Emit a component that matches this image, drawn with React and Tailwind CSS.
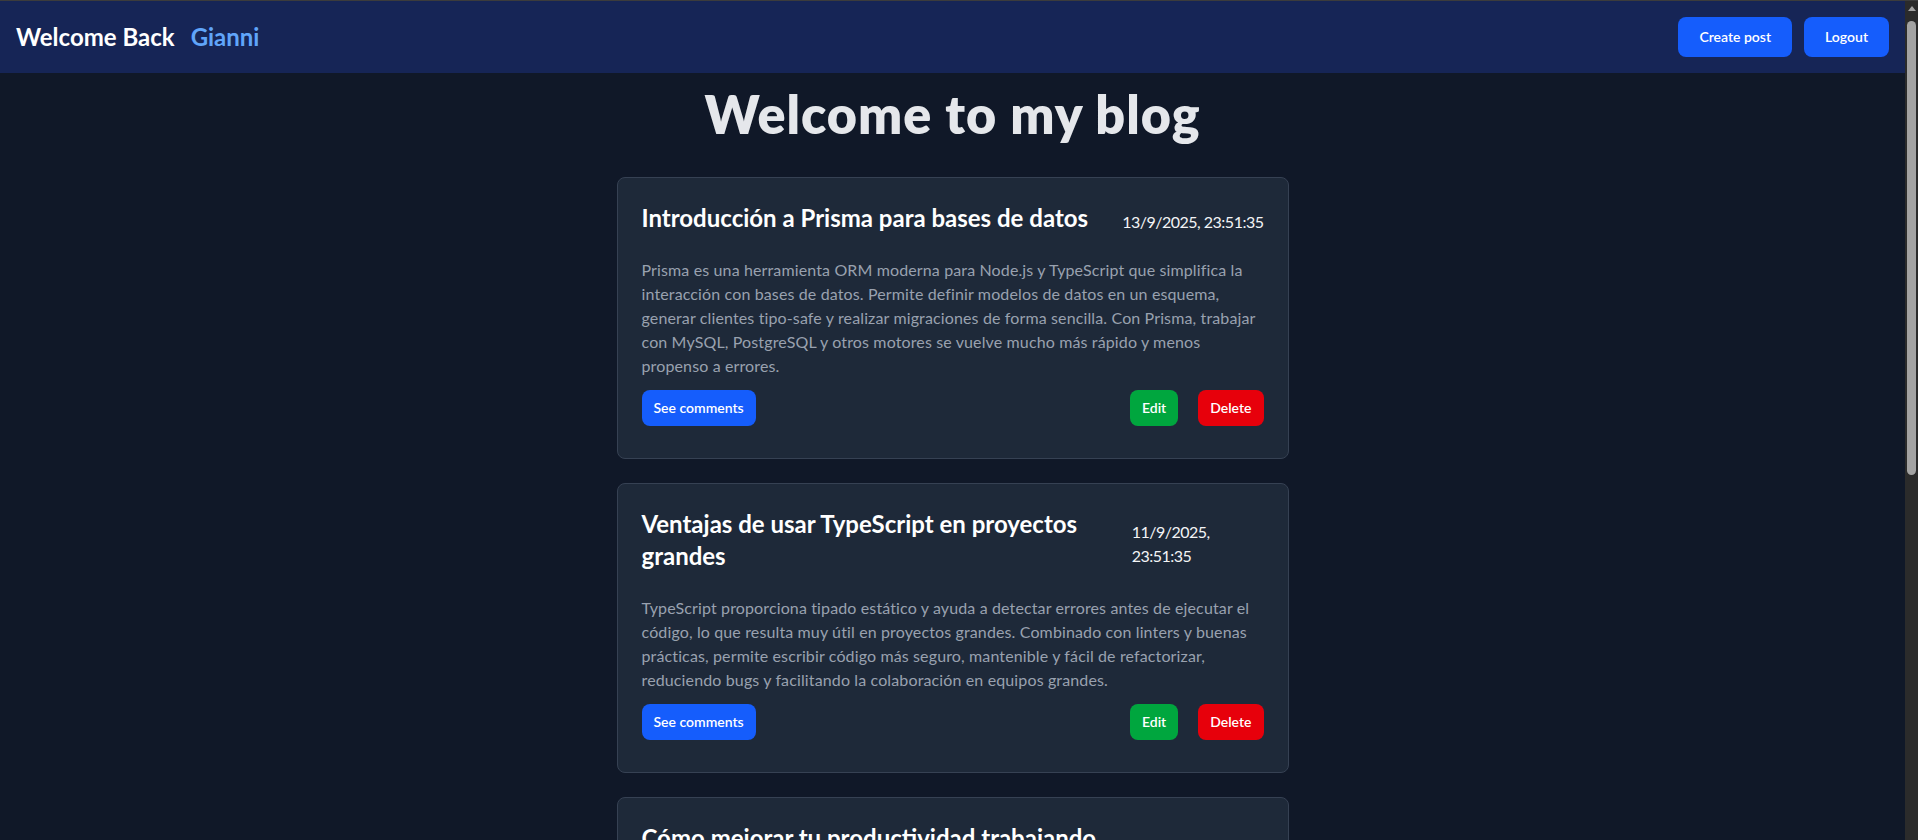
import React from 'react';

const posts = [
  {
    id: 1,
    title: 'Introducción a Prisma para bases de datos',
    date: '13/9/2025, 23:51:35',
    content:
      'Prisma es una herramienta ORM moderna para Node.js y TypeScript que simplifica la interacción con bases de datos. Permite definir modelos de datos en un esquema, generar clientes tipo-safe y realizar migraciones de forma sencilla. Con Prisma, trabajar con MySQL, PostgreSQL y otros motores se vuelve mucho más rápido y menos propenso a errores.',
  },
  {
    id: 2,
    title: 'Ventajas de usar TypeScript en proyectos grandes',
    date: '11/9/2025, 23:51:35',
    content:
      'TypeScript proporciona tipado estático y ayuda a detectar errores antes de ejecutar el código, lo que resulta muy útil en proyectos grandes. Combinado con linters y buenas prácticas, permite escribir código más seguro, mantenible y fácil de refactorizar, reduciendo bugs y facilitando la colaboración en equipos grandes.',
  },
  {
    id: 3,
    title: 'Cómo mejorar tu productividad trabajando desde casa',
    date: '9/9/2025, 23:51:35',
    content:
      'Trabajar desde casa requiere disciplina y una buena organización. Definir un horario fijo, preparar un espacio de trabajo cómodo y hacer pausas regulares ayuda a mantener la concentración.',
  },
];

function Navbar({ user }) {
  return (
    <nav className="flex items-center justify-between bg-blue-950 px-4 py-4">
      <div className="flex items-center gap-4 text-2xl font-bold">
        <span className="text-white">Welcome Back</span>
        <span className="text-[#60a5fa]">{user}</span>
      </div>
      <div className="flex items-center gap-3">
        <button className="rounded-lg bg-blue-600 px-[21px] py-2.5 text-sm font-semibold text-white">
          Create post
        </button>
        <button className="rounded-lg bg-blue-600 px-[21px] py-2.5 text-sm font-semibold text-white">
          Logout
        </button>
      </div>
    </nav>
  );
}

function PostCard({ post }) {
  return (
    <div className="rounded-lg border border-gray-700 bg-gray-800 px-6 pt-6 pb-8">
      <div className="flex items-center justify-between">
        <h2 className="text-2xl font-bold text-white">{post.title}</h2>
        <span className="mt-2 text-base tracking-[-0.5px] text-gray-100">{post.date}</span>
      </div>
      <p className="mt-6 text-base tracking-[0.13px] text-gray-400">{post.content}</p>
      <div className="mt-3 flex items-center justify-between">
        <button className="rounded-lg bg-blue-600 px-3 py-2 text-sm font-semibold text-white">
          See comments
        </button>
        <div className="flex items-center gap-5">
          <button className="rounded-lg bg-green-600 px-3 py-2 text-sm font-semibold text-white">
            Edit
          </button>
          <button className="rounded-lg bg-red-600 px-3 py-2 text-sm font-semibold text-white">
            Delete
          </button>
        </div>
      </div>
    </div>
  );
}

// browser scrollbar as it shows in the screenshot
function Scrollbar() {
  return (
    <div className="flex w-[13px] shrink-0 flex-col items-center bg-[#2b2b2b] pt-[5px]">
      <div className="h-0 w-0 border-x-[4px] border-b-[5px] border-x-transparent border-b-[#a3a3a3]" />
      <div className="mt-[10px] h-[454px] w-[9px] rounded-full bg-[#a3a3a3]" />
    </div>
  );
}

export default function App() {
  return (
    <div className="flex h-screen flex-col overflow-hidden bg-gray-900 font-['Lato',sans-serif]">
      <div className="h-px shrink-0 bg-[#3c3c3c]" />
      <div className="flex min-h-0 flex-1">
        <div className="min-w-0 flex-1 overflow-hidden">
          <Navbar user="Gianni" />
          <main className="mx-auto max-w-2xl pb-10">
            <h1 className="mt-[15px] mb-[37px] text-center text-[52px] leading-none font-extrabold tracking-[1px] text-gray-200">
              Welcome to my blog
            </h1>
            <div className="flex flex-col gap-6">
              {posts.map((post) => (
                <PostCard key={post.id} post={post} />
              ))}
            </div>
          </main>
        </div>
        <Scrollbar />
      </div>
    </div>
  );
}
